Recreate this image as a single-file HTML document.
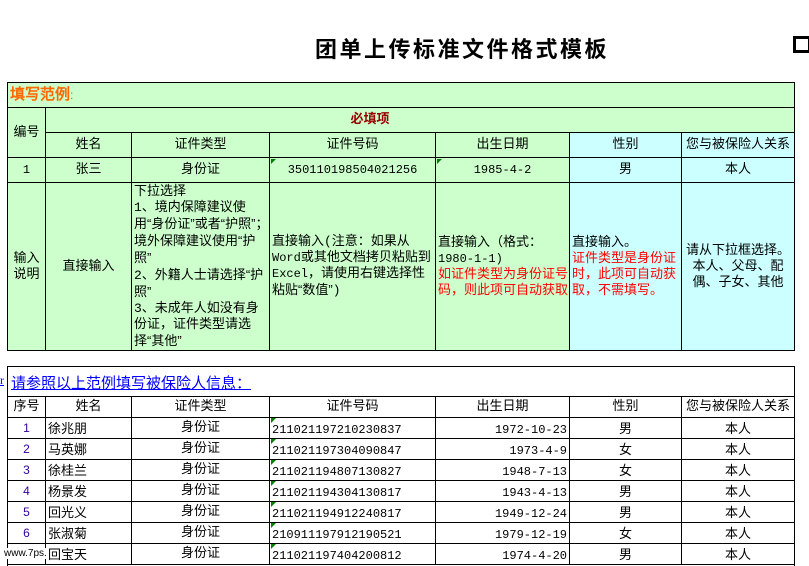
<!DOCTYPE html>
<html><head><meta charset="utf-8"><style>
body{margin:0;width:809px;height:561px;overflow:hidden;background:#fff;position:relative;font-family:"Liberation Mono","WenQuanYi Zen Hei","Noto Sans CJK SC",monospace;font-size:13px;color:#000}
.c{position:absolute;box-sizing:border-box;border-right:1px solid #000;border-bottom:1px solid #000;display:flex;align-items:center;justify-content:center;text-align:center;line-height:16px}
.l{justify-content:flex-start;text-align:left;padding-left:2px}
.r{justify-content:flex-end;padding-right:2px}
.b{align-items:flex-end;padding-bottom:0px}
.g{background:#ccffcc}.y{background:#ccffff}
.red{color:#f00}
.tri{position:absolute;width:0;height:0;border-top:5px solid #008000;border-right:5px solid transparent}
.n{color:#330099}
.q{font-family:"WenQuanYi Zen Hei",sans-serif}
.d{font-size:12px}
</style></head><body>
<div style="position:absolute;left:315px;top:32px;font-size:22px;font-weight:bold;letter-spacing:2.5px;font-family:'Noto Sans CJK SC',sans-serif">团单上传标准文件格式模板</div>
<div style="position:absolute;left:793px;top:36px;width:12px;height:11px;border:3px solid #000"></div>

<div style="position:absolute;left:7px;top:82px;width:788px;height:269px;border-left:1px solid #000;border-top:1px solid #000;box-sizing:border-box"></div>
<div class="c g l" style="left:8px;top:83px;width:787px;height:25px;color:#ff6600;font-weight:bold;font-size:15px;font-family:'WenQuanYi Zen Hei',sans-serif"><div>填写范例<span style="font-weight:normal;font-size:12px">:</span></div></div>
<div class="c g" style="left:8px;top:108px;width:38px;height:50px">编号</div>
<div class="c g" style="left:46px;top:108px;width:749px;height:25px;color:#990000;font-weight:bold;font-size:13px"><span style="position:relative;left:-50px">必填项</span></div>
<div class="c g" style="left:46px;top:133px;width:86px;height:25px">姓名</div>
<div class="c g" style="left:132px;top:133px;width:138px;height:25px">证件类型</div>
<div class="c g" style="left:270px;top:133px;width:166px;height:25px">证件号码</div>
<div class="c g" style="left:436px;top:133px;width:134px;height:25px">出生日期</div>
<div class="c y" style="left:570px;top:133px;width:112px;height:25px">性别</div>
<div class="c y" style="left:682px;top:133px;width:113px;height:25px">您与被保险人关系</div>
<div class="c g d" style="left:8px;top:158px;width:38px;height:25px">1</div>
<div class="c g" style="left:46px;top:158px;width:86px;height:25px">张三</div>
<div class="c g" style="left:132px;top:158px;width:138px;height:25px">身份证</div>
<div class="c g d" style="left:270px;top:158px;width:166px;height:25px">350110198504021256</div>
<div class="c g d" style="left:436px;top:158px;width:134px;height:25px">1985-4-2</div>
<div class="c y" style="left:570px;top:158px;width:112px;height:25px">男</div>
<div class="c y" style="left:682px;top:158px;width:113px;height:25px">本人</div>
<div class="tri" style="left:271px;top:159px"></div><div class="tri" style="left:437px;top:159px"></div>
<div class="c g" style="left:8px;top:183px;width:38px;height:168px">输入<br>说明</div>
<div class="c g" style="left:46px;top:183px;width:86px;height:168px">直接输入</div>
<div class="c g l" style="left:132px;top:183px;width:138px;height:168px;padding-left:2px;line-height:16px"><div>下拉选择<br>1、境内保障建议使用<span class="q">“</span>身份证<span class="q">”</span>或者<span class="q">“</span>护照<span class="q">”</span>；境外保障建议使用<span class="q">“</span>护照<span class="q">”</span><br>2、外籍人士请选择<span class="q">“</span>护照<span class="q">”</span><br>3、未成年人如没有身份证，证件类型请选择<span class="q">“</span>其他<span class="q">”</span></div></div>
<div class="c g l" style="left:270px;top:183px;width:166px;height:168px;line-height:16px"><div>直接输入(注意：如果从<span class="d">Word</span>或其他文档拷贝粘贴到<span class="d">Excel</span>，请使用右键选择性粘贴<span class="q">“</span>数值<span class="q">”</span>)</div></div>
<div class="c g l" style="left:436px;top:183px;width:134px;height:168px;line-height:16px"><div>直接输入（格式：<span class="d">1980-1-1)</span><br><span class="red">如证件类型为身份证号码，则此项可自动获取</span></div></div>
<div class="c y l" style="left:570px;top:183px;width:112px;height:168px;line-height:16px"><div>直接输入。<br><span class="red">证件类型是身份证时，此项可自动获取，不需填写。</span></div></div>
<div class="c y" style="left:682px;top:183px;width:113px;height:168px;line-height:16px"><div>请从下拉框选择。本人、父母、配偶、子女、其他</div></div>

<div style="position:absolute;left:7px;top:366px;width:788px;height:200px;border:1px solid #000;border-bottom:none;box-sizing:border-box"></div>
<div style="position:absolute;left:0;top:373px;color:#00f;text-decoration:underline;font-size:12px;font-family:'Liberation Serif',serif">r</div>
<div style="position:absolute;left:11px;top:372px;color:#00f;text-decoration:underline;font-size:15px;font-family:'WenQuanYi Zen Hei',sans-serif">请参照以上范例填写被保险人信息：</div>
<div id="bt"></div>
<script>
var H='';var cols=[8,46,132,270,436,570,682,795];
var hd=['序号','姓名','证件类型','证件号码','出生日期','性别','您与被保险人关系'];
function row(cells,top,h,cls){for(var i=0;i<7;i++){H+='<div class="c '+(cls[i]||'')+'" style="left:'+cols[i]+'px;top:'+top+'px;width:'+(cols[i+1]-cols[i])+'px;height:'+h+'px;'+(top==396?'border-top:1px solid #000;':'')+'">'+cells[i]+'</div>';}}
row(hd,396,22,[]);
var d=[['1','徐兆朋','211021197210230837','1972-10-23','男'],['2','马英娜','211021197304090847','1973-4-9','女'],['3','徐桂兰','211021194807130827','1948-7-13','女'],['4','杨景发','211021194304130817','1943-4-13','男'],['5','回光义','211021194912240817','1949-12-24','男'],['6','张淑菊','210911197912190521','1979-12-19','女'],['7','回宝天','211021197404200812','1974-4-20','男']];
var y=418;
for(var k=0;k<d.length;k++){var r=d[k];row(['<span class="n" style="font-family:Liberation Sans;font-size:12px">'+r[0]+'</span>',r[1],'身份证',r[2],r[3],r[4],'本人'],y,21,['','l b','','l b d','r b d','b','b']);H+='<div class="tri" style="left:271px;top:'+(y)+'px"></div>';y+=21;}
document.getElementById('bt').outerHTML=H;
</script>
<div style="position:absolute;left:4px;top:548px;font-size:10px;color:#000;background:#fff;font-family:'Liberation Sans',sans-serif">www.7ps.</div>
</body></html>
